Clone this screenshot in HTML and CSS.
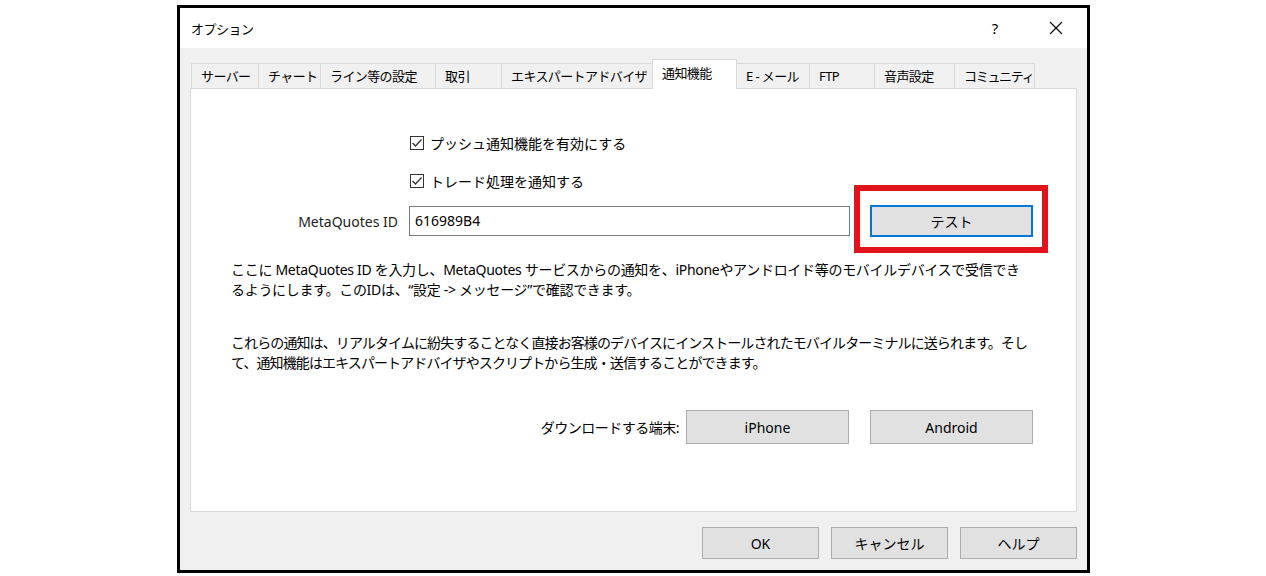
FILE: index.html
```html
<!DOCTYPE html>
<html lang="ja">
<head>
  <meta charset="UTF-8">
  <title>オプション</title>
  <link rel="stylesheet" href="styles.css">
</head>
<body>

  <div class="dialog">
    <div class="titlebar">
      <span class="title">オプション</span>
      <span class="help">?</span>
      <span class="close">
        <svg width="14" height="14" viewBox="0 0 14 14"><path d="M1 1 L13 13 M13 1 L1 13" stroke="#000" stroke-width="1.1" fill="none"/></svg>
      </span>
    </div>

    <div class="main">
      <div class="tabs">
        <div class="tab">サーバー</div>
        <div class="tab">チャート</div>
        <div class="tab">ライン等の設定</div>
        <div class="tab">取引</div>
        <div class="tab">エキスパートアドバイザ</div>
        <div class="tab active">通知機能</div>
        <div class="tab">E - メール</div>
        <div class="tab">FTP</div>
        <div class="tab">音声設定</div>
        <div class="tab tab-tight">コミュニティ</div>
      </div>

      <div class="panel">
        <div class="checks">
          <div class="check">
            <svg width="14" height="14" viewBox="0 0 14 14"><rect x="0.5" y="0.5" width="13" height="13" fill="#fff" stroke="#333"/><path d="M2.5 7 L5.5 10 L11.5 3.5" stroke="#333" stroke-width="1.3" fill="none"/></svg>
            <span>プッシュ通知機能を有効にする</span>
          </div>
          <div class="check">
            <svg width="14" height="14" viewBox="0 0 14 14"><rect x="0.5" y="0.5" width="13" height="13" fill="#fff" stroke="#333"/><path d="M2.5 7 L5.5 10 L11.5 3.5" stroke="#333" stroke-width="1.3" fill="none"/></svg>
            <span>トレード処理を通知する</span>
          </div>
        </div>

        <div class="id-row">
          <span class="id-label">MetaQuotes ID</span>
          <div class="id-input">616989B4</div>
          <div class="test-wrap">
            <button class="btn btn-focus">テスト</button>
            <span class="highlight"></span>
          </div>
        </div>

        <p class="note note-first">ここに MetaQuotes ID を入力し、MetaQuotes サービスからの通知を、iPhoneやアンドロイド等のモバイルデバイスで受信でき<br>るようにします。このIDは、“設定 -&gt; メッセージ”で確認できます。</p>

        <p class="note note-second">これらの通知は、リアルタイムに紛失することなく直接お客様のデバイスにインストールされたモバイルターミナルに送られます。そし<br>て、通知機能はエキスパートアドバイザやスクリプトから生成・送信することができます。</p>

        <div class="download-row">
          <span class="download-label">ダウンロードする端末:</span>
          <button class="btn btn-wide">iPhone</button>
          <button class="btn btn-wide">Android</button>
        </div>
      </div>

      <div class="footer">
        <button class="btn btn-footer">OK</button>
        <button class="btn btn-footer">キャンセル</button>
        <button class="btn btn-footer">ヘルプ</button>
      </div>
    </div>
  </div>

</body>
</html>
```

FILE: styles.css
```css
* {
  box-sizing: border-box;
}

body {
  margin: 0;
  background-color: #fff;
  font-family: "Noto Sans", "Noto Sans CJK JP", sans-serif;
  font-size: 14px;
  color: #000;
}

.dialog {
  width: 913px;
  height: 568px;
  margin: 5px 0 0 177px;
  border: 3px solid #000;
  background-color: #f0f0f0;
  display: flex;
  flex-direction: column;
}

.titlebar {
  height: 40px;
  background-color: #fff;
  display: flex;
  align-items: center;
  padding: 0 8px 0 11px;
}

.title {
  flex: 1;
  font-size: 13px;
  letter-spacing: -0.5px;
}

.help {
  width: 46px;
  margin-right: 15px;
  text-align: center;
  font-size: 15px;
}

.close {
  width: 46px;
  display: flex;
  justify-content: center;
}

.main {
  flex: 1;
  padding: 11px 10px 0;
}

/* tabs */
.tabs {
  display: grid;
  grid-template-columns: 67px 62px 115px 66px 151px 84px 73px 65px 80px 80px;
  height: 29px;
  padding-left: 1px;
}

.tab {
  align-self: end;
  height: 25px;
  margin-right: -1px;
  padding-left: 9px;
  border: 1px solid #d9d9d9;
  border-bottom: none;
  background-color: #f0f0f0;
  font-size: 13px;
  line-height: 24px;
  white-space: nowrap;
  letter-spacing: -0.6px;
}

.tab-tight {
  letter-spacing: -1.3px;
}

.tab.active {
  height: 30px;
  margin-bottom: -1px;
  background-color: #fff;
  position: relative;
  z-index: 1;
  line-height: 27px;
}

.panel {
  height: 424px;
  border: 1px solid #d9d9d9;
  background-color: #fff;
}

/* checkboxes */
.checks {
  padding: 44px 0 0 219px;
  display: flex;
  flex-direction: column;
  gap: 18px;
}

.check {
  display: flex;
  align-items: center;
  gap: 6px;
  height: 20px;
}

.check svg {
  flex-shrink: 0;
}

/* id row */
.id-row {
  display: flex;
  align-items: center;
  margin-top: 14px;
  height: 32px;
}

.id-label {
  width: 207px;
  text-align: right;
  margin-right: 11px;
  color: #222;
}

.id-input {
  width: 441px;
  height: 30px;
  border: 1px solid #7a7a7a;
  padding-left: 5px;
  line-height: 28px;
}

.test-wrap {
  margin-left: 20px;
  position: relative;
}

.highlight {
  position: absolute;
  left: -16px;
  top: -20px;
  width: 194px;
  height: 68px;
  border: 6px solid #e3131b;
}

/* buttons */
.btn {
  font-family: inherit;
  font-size: 14px;
  color: #000;
  background-color: #e1e1e1;
  border: 1px solid #adadad;
  padding: 0;
  cursor: pointer;
}

.btn-focus {
  width: 163px;
  height: 32px;
  border: 2px solid #0078d7;
}

.btn-wide {
  width: 163px;
  height: 34px;
}

.btn-footer {
  width: 117px;
  height: 32px;
}

/* notes */
.note {
  margin: 23px 0 0 40px;
  line-height: 20px;
  white-space: nowrap;
  letter-spacing: -0.9px;
}

.note-first {
  letter-spacing: -0.3px;
}

.note-second {
  margin-top: 33px;
}

.download-row {
  display: flex;
  justify-content: flex-end;
  align-items: center;
  gap: 21px;
  margin-top: 37px;
  padding-right: 43px;
}

.download-label {
  margin-right: -14px;
  letter-spacing: -0.5px;
}

.footer {
  display: flex;
  justify-content: flex-end;
  gap: 12px;
  margin-top: 15px;
}
```
